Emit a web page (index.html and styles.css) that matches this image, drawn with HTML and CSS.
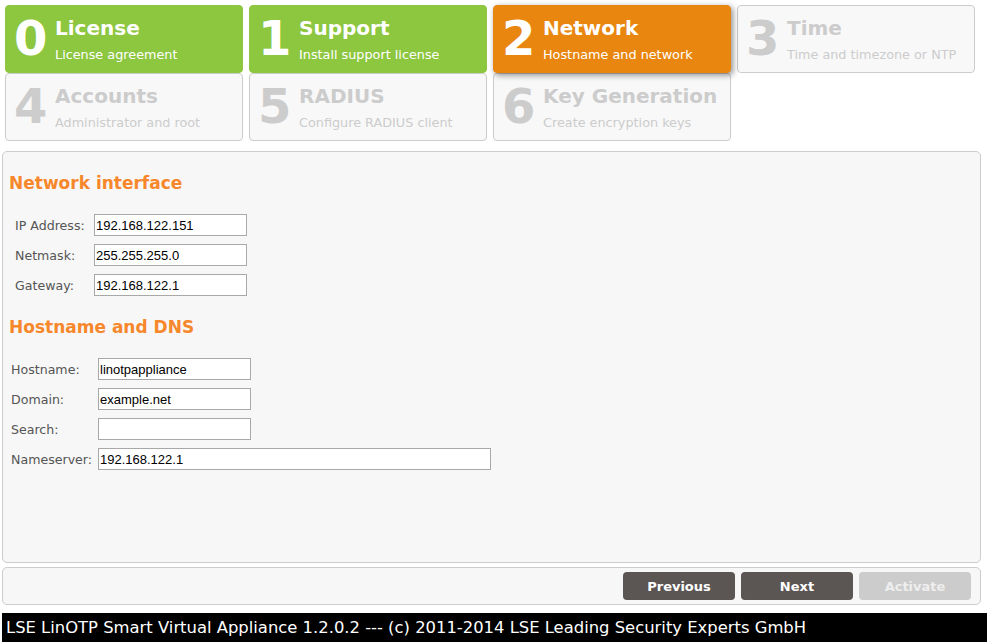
FILE: index.html
```html
<!DOCTYPE html>
<html lang="en">
<head>
    <meta charset="UTF-8">
    <title>LinOTP Smart Virtual Appliance - Setup</title>
    <link rel="stylesheet" href="styles.css">
</head>
<body>
    <div class="steps">
        <div class="step done">
            <span class="num">0</span>
            <div class="step-text"><h3>License</h3><p>License agreement</p></div>
        </div>
        <div class="step done">
            <span class="num">1</span>
            <div class="step-text"><h3>Support</h3><p>Install support license</p></div>
        </div>
        <div class="step current">
            <span class="num">2</span>
            <div class="step-text"><h3>Network</h3><p>Hostname and network</p></div>
        </div>
        <div class="step">
            <span class="num">3</span>
            <div class="step-text"><h3>Time</h3><p>Time and timezone or NTP</p></div>
        </div>
        <div class="step">
            <span class="num">4</span>
            <div class="step-text"><h3>Accounts</h3><p>Administrator and root</p></div>
        </div>
        <div class="step">
            <span class="num">5</span>
            <div class="step-text"><h3>RADIUS</h3><p>Configure RADIUS client</p></div>
        </div>
        <div class="step">
            <span class="num">6</span>
            <div class="step-text"><h3>Key Generation</h3><p>Create encryption keys</p></div>
        </div>
    </div>

    <div class="panel">
        <h2>Network interface</h2>
        <div class="form form-net">
            <label>IP Address:</label><input type="text" value="192.168.122.151">
            <label>Netmask:</label><input type="text" value="255.255.255.0">
            <label>Gateway:</label><input type="text" value="192.168.122.1">
        </div>

        <h2>Hostname and DNS</h2>
        <div class="form form-dns">
            <label>Hostname:</label><input type="text" value="linotpappliance">
            <label>Domain:</label><input type="text" value="example.net">
            <label>Search:</label><input type="text" value="">
            <label>Nameserver:</label><input type="text" class="wide" value="192.168.122.1">
        </div>
    </div>

    <div class="buttonbar">
        <button>Previous</button>
        <button>Next</button>
        <button class="disabled">Activate</button>
    </div>

    <footer>LSE LinOTP Smart Virtual Appliance 1.2.0.2 --- (c) 2011-2014 LSE Leading Security Experts GmbH</footer>
</body>
</html>
```

FILE: styles.css
```css
:root {
    --green: #8dc63f;
    --orange: #e8860f;
    --heading: #f7872b;
    --light: #f7f7f7;
    --line: #cccccc;
    --dark: #5b5553;
}

* {
    margin: 0;
    padding: 0;
    box-sizing: border-box;
}

body {
    font-family: 'DejaVu Sans', Verdana, sans-serif;
    background-color: #ffffff;
    padding: 0 0 0 2px;
    width: 987px;
    height: 642px;
    overflow: hidden;
}

/* wizard steps */
.steps {
    display: flex;
    flex-wrap: wrap;
    column-gap: 6px;
    row-gap: 0;
    padding: 5px 0 0 3px;
    width: 979px;
}

.step {
    width: 238px;
    height: 68px;
    display: flex;
    border: 1px solid var(--line);
    border-radius: 4px;
    background-color: #f8f8f8;
    color: #cccccc;
    padding: 10px 0 0 8px;
}

.step.done {
    background-color: var(--green);
    border-color: var(--green);
    color: #ffffff;
}

.step.current {
    background-color: var(--orange);
    border-color: var(--orange);
    color: #ffffff;
    box-shadow: 2px 2px 6px rgba(0, 0, 0, 0.45);
    position: relative;
    z-index: 1;
}

.num {
    width: 41px;
    font-size: 48px;
    font-weight: 700;
    line-height: 48px;
    margin-top: -2px;
}

.step-text h3 {
    font-size: 20px;
    line-height: 24px;
    font-weight: 700;
}

.step-text p {
    font-size: 12.8px;
    line-height: 16px;
    margin-top: 7px;
}

/* main form panel */
.panel {
    margin-top: 10px;
    width: 979px;
    height: 412px;
    border: 1px solid var(--line);
    border-radius: 5px;
    background-color: var(--light);
    padding: 21px 6px 0;
}

.panel h2 {
    color: var(--heading);
    font-size: 17px;
    line-height: 20px;
    font-weight: 700;
}

.form {
    display: grid;
    grid-auto-rows: 30px;
    align-items: center;
    margin: 17px 0;
}

.form-net {
    grid-template-columns: 79px max-content;
    padding-left: 6px;
}

.form-dns {
    grid-template-columns: 87px max-content;
    padding-left: 2px;
}

.form label {
    font-size: 12.6px;
    color: #555555;
    white-space: nowrap;
}

.form input {
    width: 153px;
    height: 22px;
    border: 1px solid #a8a8a8;
    background-color: #ffffff;
    font-family: 'Liberation Sans', Arial, sans-serif;
    font-size: 13px;
    color: #000000;
    padding: 0 1px;
    outline: none;
}

.form input.wide {
    width: 393px;
}

/* button bar */
.buttonbar {
    margin-top: 4px;
    width: 979px;
    height: 38px;
    border: 1px solid var(--line);
    border-radius: 5px;
    background-color: var(--light);
    display: flex;
    justify-content: flex-end;
    gap: 6px;
    padding: 4px 9px 0 0;
}

.buttonbar button {
    width: 112px;
    height: 28px;
    border: none;
    border-radius: 4px;
    background-color: var(--dark);
    color: #ffffff;
    font-family: 'DejaVu Sans', Verdana, sans-serif;
    font-size: 13px;
    font-weight: 700;
    cursor: pointer;
}

.buttonbar button.disabled {
    background-color: #cccccc;
    color: #eeeeee;
    cursor: default;
}

footer {
    margin-top: 8px;
    height: 30px;
    background-color: #000000;
    color: #ffffff;
    font-size: 16.4px;
    line-height: 30px;
    padding-left: 4px;
    white-space: nowrap;
}
```
